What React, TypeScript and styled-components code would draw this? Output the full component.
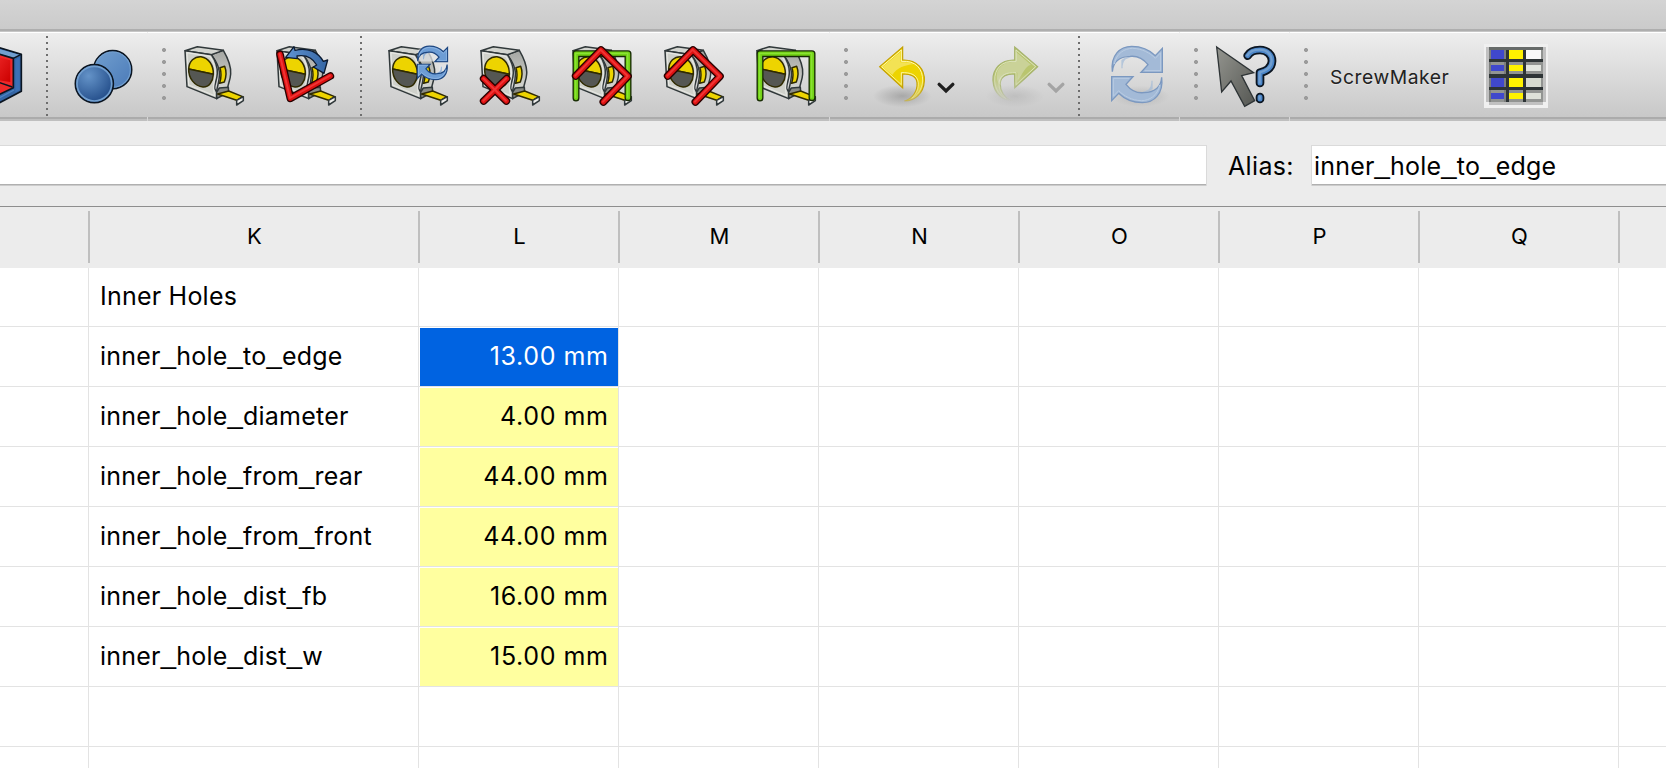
import React from "react";
import styled, { createGlobalStyle } from "styled-components";

const GlobalStyle = createGlobalStyle`
  * { box-sizing: border-box; }
  body { margin: 0; background: #fff; overflow: hidden; }
`;

const Window = styled.div`
  width: 1666px;
  height: 768px;
  overflow: hidden;
  display: flex;
  flex-direction: column;
  background: #ececec;
  color: #000;
  font-family: Inter, "Liberation Sans", sans-serif;
`;

const TitleStrip = styled.div`
  flex: none;
  height: 32px;
  background: linear-gradient(#d4d4d4, #cacaca);
  border-bottom: 1px solid #c6c6c6;
  box-shadow: inset 0 -2px 0 #aeaeae;
`;

const ToolbarRow = styled.div`
  flex: none;
  display: flex;
  gap: 1px;
  height: 89px;
  background: linear-gradient(#eeeeee, #c8c8c8 85px, #d6d6d6 85px);
`;

const ToolGroup = styled.div<{ $width?: number }>`
  flex: ${(p) => (p.$width ? `0 0 ${p.$width}px` : "1 1 0")};
  display: flex;
  align-items: flex-start;
  height: 89px;
  border-top: 1px solid #fff;
  border-bottom: 2px solid #bfbfbf;
  box-shadow: inset 0 -2px 0 #ababab;
  overflow: hidden;
`;

const Icon = styled.svg<{ $left?: number; $top?: number }>`
  flex: none;
  display: block;
  margin-left: ${(p) => p.$left ?? 0}px;
  margin-top: ${(p) => p.$top ?? 13}px;
  overflow: visible;
`;

const Paints = styled.svg`
  display: block;
  flex: none;
  width: 0;
  height: 0;
`;

const Separator = styled.div<{ $left: number }>`
  flex: none;
  width: 2px;
  height: 80px;
  margin: 3px 0 0 ${(p) => p.$left}px;
  background: repeating-linear-gradient(#6e6e6e 0 2px, transparent 2px 6px);
`;

const Handle = styled.div<{ $left: number }>`
  flex: none;
  width: 4px;
  height: 60px;
  margin: 11px 0 0 ${(p) => p.$left}px;
  background: radial-gradient(circle at 2px 6px, #9b9b9b 1.7px, transparent 2.3px) 0 0 / 4px 12px repeat-y;
`;

const ToolLabel = styled.span`
  flex: none;
  width: 154px;
  margin: 31px 0 0 22px;
  font-size: 19.3px;
  line-height: 26px;
  letter-spacing: 0.55px;
  color: #222;
  text-shadow: 0 1px 0 rgba(255, 255, 255, 0.4);
  white-space: nowrap;
`;

const FormulaBar = styled.div`
  flex: none;
  display: flex;
  align-items: flex-start;
  height: 85px;
  padding-top: 24px;
`;

const Field = styled.div<{ $width?: number }>`
  flex: ${(p) => (p.$width ? `0 0 ${p.$width}px` : "1 1 0")};
  height: 41px;
  padding-left: 2px;
  background: #fff;
  border: solid #dadada;
  border-width: ${(p) => (p.$width ? "1px 1px 0 0" : "1px 0 0 1px")};
  box-shadow: inset 0 -1px 0 #cccccc, inset 0 -2px 0 #b0b0b0;
  font-size: 25px;
  line-height: 40px;
  letter-spacing: 0.2px;
  white-space: nowrap;
`;

const FieldLabel = styled.span`
  flex: none;
  width: 104px;
  padding-left: 21px;
  font-size: 25px;
  line-height: 42px;
  letter-spacing: 0.35px;
  white-space: nowrap;
`;

const WideUnderscore = styled.span`
  font-family: "Liberation Sans", sans-serif;
  font-size: 27.5px;
  line-height: 0;
  vertical-align: 2px;
`;

const COLUMNS = "88px 330px repeat(6, 200px) 48px";

const HeaderRow = styled.div`
  flex: none;
  display: grid;
  grid-template-columns: ${COLUMNS};
  height: 62px;
  padding: 4px 0 5px;
  border-top: 1px solid #8e8e8e;
  background: #ececec;
`;

const HeaderCell = styled.div<{ $first?: boolean }>`
  border-left: ${(p) => (p.$first ? "0" : "2px solid #bfbfbf")};
  padding-left: 1px;
  font-size: 22px;
  line-height: 50px;
  text-align: center;
`;

const SheetRow = styled.div<{ $first?: boolean }>`
  flex: none;
  display: grid;
  grid-template-columns: ${COLUMNS};
  height: ${(p) => (p.$first ? 59 : 60)}px;
  background: #fff;
  line-height: ${(p) => (p.$first ? 55 : 57)}px;
`;

type Tone = "plain" | "value" | "selected";
const toneFill: Record<Tone, string> = { plain: "#fff", value: "#ffff9f", selected: "#0063e1" };

const Cell = styled.div<{ $edge?: boolean }>`
  display: flex;
  padding: 1px 0 0 1px;
  border-left: ${(p) => (p.$edge ? "0" : "1px solid #e3e3e3")};
  border-bottom: 1px solid #e3e3e3;
`;

const CellBody = styled.div<{ $tone: Tone; $right?: boolean }>`
  flex: 1;
  padding: 0 ${(p) => (p.$right ? 9.5 : 10)}px 0 10px;
  background: ${(p) => toneFill[p.$tone]};
  color: ${(p) => (p.$tone === "selected" ? "#fff" : "#000")};
  text-align: ${(p) => (p.$right ? "right" : "left")};
  font-size: 25px;
  letter-spacing: ${(p) => (p.$right ? "0.65px" : "0.22px")};
  word-spacing: ${(p) => (p.$right ? "-0.4px" : "0")};
  white-space: nowrap;
`;

const INK = "#30383a";

/** Measuring tape body shared by all the measurement tools. */
const TapeBody = () => (
  <g stroke={INK} strokeWidth="4.5" strokeLinejoin="round">
    <path d="M82 26 118 13C132 37 142 62 140 84 139 103 131 114 131 128L98 136C99 122 108 104 106 78 104 54 92 40 82 26Z" fill="url(#tapeSide)" />
    <path d="M3 14 40 2 118 13 82 26Z" fill="#d3d5d0" />
    <path d="M3 14 82 26C94 44 101 60 100 82 99 104 91 112 92 128L98 138V158L9 122Z" fill="#cfd1cb" />
    <path d="M9 20 78 31C90 50 95 64 94 84 92 104 84 120 92 149L14 117Z" fill="none" stroke="#e6e7e3" strokeWidth="3.5" />
    <path d="M14 69C15 46 31 31 51 32 74 36 89 57 88 85Z" fill="#edd400" stroke="#302b00" />
    <path d="M14 69 88 85C87 107 75 124 57 123 32 121 13 96 14 69Z" fill="#555753" stroke="#302b00" />
    <path d="M108 65 122 61C128 76 126 95 121 108L107 112C112 96 113 82 108 65Z" fill="#edd400" stroke="#302b00" />
    <path d="M98 138 106 126 133 124 134 138 98 158Z" fill="#888a85" />
    <path d="M101 144 134 135 176 152 158 163Z" fill="#edd400" stroke="#302b00" />
    <path d="M158 163 178 152V164L158 177Z" fill="#eeeeec" />
  </g>
);

type BarProps = { d: string; dark: string; mid: string; light: string; w: number };

const Bar = ({ d, dark, mid, light, w }: BarProps) => (
  <g fill="none" strokeLinecap="round" strokeLinejoin="round">
    <path d={d} stroke={dark} strokeWidth={w} />
    <path d={d} stroke={mid} strokeWidth={w - 8} />
    <path d={d} stroke={light} strokeWidth={w - 17} transform="translate(-1 -1)" />
  </g>
);

const red = { dark: "#280000", mid: "#dd1111", light: "#f03434", w: 23 };
const green = { dark: "#172a04", mid: "#73d216", light: "#8ae234", w: 21 };

const RedRoof = () => <Bar d="M11 90 87 12 168 91 94 168" {...red} />;
const GreenGate = () => <Bar d="M12 156V23H168V155" {...green} />;

const HALF_LOOP =
  "M4 77C-2 28 27 1 62 1 96 1 118 14 133 29L154 7V79H90L111 56C93 33 76 29 57 31 25 32 6 49 4 77Z";

const LoopArrows = ({ stroke, fill, shine, w }: { stroke: string; fill: string; shine: string; w: number }) => (
  <g strokeLinejoin="miter">
    <path d="M31 67V43C43 32 59 31 67 31L44 40Q34 50 35 67Z" fill={fill} opacity="0.7" />
    <path d="M125 104V128C113 139 97 140 89 140L112 131Q122 121 121 104Z" fill={fill} opacity="0.7" />
    {[undefined, "rotate(180 78 85.5)"].map((t) => (
      <g key={t ?? "top"} transform={t}>
        <path d={HALF_LOOP} fill={fill} stroke={stroke} strokeWidth={w} />
        <path d="M10 54C16 22 41 7 65 7 94 8 117 21 133 37L149 20V74H101" fill="none" stroke={shine} strokeWidth="3" />
      </g>
    ))}
  </g>
);

const CurvedArrow = ({ id }: { id: string }) => (
  <>
    <path
      d="M2 62 71 3V42C114 40 138 70 136 105 134 145 104 166 76 165 101 157 116 135 114 110 112 91 94 84 71 84V126Z"
      fill={`url(#${id}Fill)`}
      stroke={`url(#${id}Edge)`}
      strokeWidth="3.5"
    />
    <path
      d="M8 62 67 12V46C110 43 132 68 131 105 129 132 113 151 98 157 113 144 119 126 118 110 115 86 95 79 67 80V116Z"
      fill="none"
      stroke={`url(#${id}Shine)`}
      strokeWidth="3"
    />
  </>
);

const Fade = ({ id, color, from, end }: { id: string; color: string; from: number; end: number }) => (
  <linearGradient id={id} x1="0" x2="0" y1="0" y2="1">
    <stop offset={from} stopColor={color} />
    <stop offset="1" stopColor={color} stopOpacity={end} />
  </linearGradient>
);

const SharedPaints = () => (
  <Paints aria-hidden="true">
    <defs>
      <linearGradient id="tapeSide" x1="0" x2="0" y1="0" y2="1">
        <stop offset="0" stopColor="#a4a6a2" /><stop offset="1" stopColor="#d8d9d5" />
      </linearGradient>
      <Fade id="undoFill" color="#edd400" from={0.6} end={0.35} />
      <Fade id="undoEdge" color="#c4a000" from={0.75} end={0.35} />
      <Fade id="undoShine" color="#fff8b8" from={0.4} end={0.3} />
      <Fade id="redoFill" color="#b9c56f" from={0.5} end={0} />
      <Fade id="redoEdge" color="#a6b36e" from={0.6} end={0} />
      <Fade id="redoShine" color="#dde4bf" from={0.4} end={0.2} />
      <radialGradient id="softShade">
        <stop offset="0" stopColor="#000" stopOpacity=".2" /><stop offset="1" stopColor="#000" stopOpacity="0" />
      </radialGradient>
      <linearGradient id="ballBack" x1="0" x2="1" y1="0" y2="1">
        <stop offset="0" stopColor="#729fcf" /><stop offset="1" stopColor="#4a7ab8" />
      </linearGradient>
      <radialGradient id="ballFront" cx=".35" cy=".3" r=".75">
        <stop offset="0" stopColor="#6493c8" /><stop offset="1" stopColor="#204a87" />
      </radialGradient>
      <linearGradient id="cubeRed" x1="0" x2="1" y1="0" y2="1">
        <stop offset="0" stopColor="#ef2929" /><stop offset="1" stopColor="#cc0000" />
      </linearGradient>
      <linearGradient id="pointer" x1="0" x2="1" y1="0" y2="1">
        <stop offset="0" stopColor="#94958f" /><stop offset="1" stopColor="#555753" />
      </linearGradient>
      <linearGradient id="swing" x1="0" x2="1">
        <stop offset="0" stopColor="#5f93d0" /><stop offset="1" stopColor="#3465a4" />
      </linearGradient>
    </defs>
  </Paints>
);

const Tape = ({ left, children }: { left: number; children?: React.ReactNode }) => (
  <Icon $left={left} width="60" height="60" viewBox="0 0 180 180">
    <TapeBody />
    {children}
  </Icon>
);

const CubeIcon = () => (
  <Icon $top={13} width="22" height="60" viewBox="0 0 66 180" strokeLinejoin="round">
    <path d="M-20 0 64 25V136L-20 180Z" fill="#3465a4" stroke="#0b1521" strokeWidth="5" />
    <path d="M-20 4 60 27 41 36-20 18Z" fill="#729fcf" />
    <path d="M46 41 59 34V132L46 139Z" fill="#3b71b5" />
    <path d="M-20 19 40 37V125L-20 154Z" fill="#ef2929" stroke="#0b1521" strokeWidth="5" />
    <path d="M-20 29 31 43V108L-20 101Z" fill="url(#cubeRed)" />
    <path d="M-20 103 37 123M40 37 62 26" fill="none" stroke="#0b1521" strokeWidth="4.5" />
    <path d="M-20 165 42 132" stroke="#4b84c4" strokeWidth="4" />
  </Icon>
);

const UnionIcon = () => (
  <Icon $left={26} width="60" height="60" viewBox="0 0 180 180">
    <circle cx="116" cy="71" r="57" fill="url(#ballBack)" stroke="#0b1521" strokeWidth="5" />
    <circle cx="116" cy="71" r="53" fill="none" stroke="#729fcf" strokeWidth="3.5" />
    <circle cx="61" cy="113" r="57" fill="url(#ballFront)" stroke="#0b1521" strokeWidth="5" />
    <circle cx="61" cy="113" r="52" fill="none" stroke="#729fcf" strokeWidth="5" />
  </Icon>
);

const Chevron = ({ left, color }: { left: number; color: string }) => (
  <Icon $left={left} $top={49} width="18" height="12" viewBox="0 0 18 12">
    <path d="M2.2 2.4 9 9 15.8 2.4" fill="none" stroke={color} strokeWidth="3.4" strokeLinecap="round" strokeLinejoin="miter" />
  </Icon>
);

const SheetIcon = () => {
  const rows = [
    { y: 18, h: 27, pale: "#f8f8f8" },
    { y: 63, h: 18, pale: "#e3e6e0" },
    { y: 102, h: 27, pale: "#d6dad0" },
    { y: 147, h: 18, pale: "#dde0d8" },
  ];
  return (
    <Icon $top={11} width="64" height="64" viewBox="0 0 192 192" shapeRendering="crispEdges">
      <path d="M0 0H192V192H0Z" fill="#f0f0f0" />
      <path d="M6 9H186V174H177V183H15V174H6Z" fill="#c1c1c1" />
      <path d="M15 9H177V174H15Z" fill="#929492" />
      <path d="M15 9H177V18H15Z" fill="#666a69" />
      <path d="M15 18H21V174H15ZM60 18H66V174H60Z" fill="#7c7e7d" />
      {rows.map((r) => (
        <g key={r.y}>
          <rect x="21" y={r.y} width="39" height={r.h} fill="#4048cc" />
          <rect x="75" y={r.y} width="42" height={r.h} fill="#fff200" />
          <rect x="126" y={r.y} width="45" height={r.h} fill={r.pale} />
        </g>
      ))}
      <path d="M66 18H75V174H66ZM117 18H126V174H117ZM15 45H177V54H15ZM15 90H177V102H15ZM15 129H177V138H15Z" fill="#2e3436" />
    </Icon>
  );
};

const HEADERS = ["", "K", "L", "M", "N", "O", "P", "Q", ""];
const ROWS: Array<[string, string]> = [
  ["Inner Holes", ""],
  ["inner_hole_to_edge", "13.00 mm"],
  ["inner_hole_diameter", "4.00 mm"],
  ["inner_hole_from_rear", "44.00 mm"],
  ["inner_hole_from_front", "44.00 mm"],
  ["inner_hole_dist_fb", "16.00 mm"],
  ["inner_hole_dist_w", "15.00 mm"],
  ["", ""],
  ["", ""],
];
const SELECTED_ROW = 1;

/** Identifier text with full-width underscores between its words. */
const Identifier = ({ text }: { text: string }) => (
  <>
    {text.split("_").map((word, i) => (
      <React.Fragment key={i}>
        {i > 0 && <WideUnderscore>_</WideUnderscore>}
        {word}
      </React.Fragment>
    ))}
  </>
);

const QUESTION = "M95 29C103 15 117 12 132 12 154 12 169 27 168 46 167 69 149 76 132 80V111M132 153V159";

const Toolbar = () => (
  <ToolbarRow>
    <ToolGroup $width={147}>
      <CubeIcon />
      <Separator $left={24} />
      <UnionIcon />
    </ToolGroup>
    <ToolGroup $width={681}>
      <Handle $left={14} />
      <Tape left={18} />
      <Tape left={32}>
        <path
          d="M29 34 54 2 57 13C96 3 126 19 142 46L155 42 144 82 112 63 122 57C110 36 88 26 63 30L64 38Z"
          fill="url(#swing)"
          stroke="#0b1a30"
          strokeWidth="4"
          strokeLinejoin="round"
        />
        <Bar d="M12 25 43 157 163 90" {...red} />
      </Tape>
      <Separator $left={24} />
      <Tape left={26}>
        <g transform="translate(87 0) scale(.595)">
          <path d="M5 20Q60-10 151 20V78H5ZM110 97H150V135H110Z" fill="#e1e4e7" opacity=".75" />
          <LoopArrows stroke="#1d4680" fill="#6d9dd5" shine="#9fc3eb" w={6} />
        </g>
      </Tape>
      <Tape left={32}>
        <Bar d="M11 98 79 165M80 98 11 165" {...red} />
      </Tape>
      <Tape left={32}><GreenGate /><RedRoof /></Tape>
      <Tape left={32}><RedRoof /></Tape>
      <Tape left={32}><GreenGate /></Tape>
    </ToolGroup>
    <ToolGroup $width={349}>
      <Handle $left={14} />
      <Icon $left={31} width="48" height="60" viewBox="0 0 144 180">
        <ellipse cx="70" cy="150" rx="88" ry="34" fill="url(#softShade)" />
        <CurvedArrow id="undo" />
        <path d="M11 62 64 18V49C82 49 93 50 102 55 80 57 53 65 40 87Z" fill="#fff" opacity=".33" />
      </Icon>
      <Chevron left={10} color="#1f1f1f" />
      <Icon $left={36} width="48" height="60" viewBox="0 0 144 180">
        <ellipse cx="72" cy="150" rx="88" ry="34" fill="url(#softShade)" opacity=".45" />
        <g transform="translate(142 0) scale(-1 1)">
          <CurvedArrow id="redo" />
        </g>
        <path d="M75 18 120 56C101 61 97 82 79 105V80C50 75 28 88 28 118 14 102 12 78 30 61 45 47 60 48 75 47Z" fill="#e4e7d8" opacity=".4" />
      </Icon>
      <Chevron left={8} color="#a4a4a4" />
      <Separator $left={13} />
      <Icon $left={31} width="52" height="60" viewBox="0 0 156 180">
        <ellipse cx="88" cy="151" rx="88" ry="32" fill="url(#softShade)" opacity=".6" />
        <LoopArrows stroke="#7b98c0" fill="#a3bad7" shine="#b9cce3" w={4} />
      </Icon>
    </ToolGroup>
    <ToolGroup $width={109}>
      <Handle $left={14} />
      <Icon $left={18} width="60" height="62" viewBox="0 0 180 186">
        <path d="M2 3 113 80 77 89 116 164 86 181 45 105 17 138Z" fill="url(#pointer)" stroke="#2e3436" strokeWidth="4" />
        <g fill="none" strokeLinecap="round" strokeLinejoin="round">
          <path d={QUESTION} stroke="#0b1521" strokeWidth="26" />
          <path d={QUESTION} stroke="#4b86c9" strokeWidth="15" />
          <path d={QUESTION} stroke="#729fcf" strokeWidth="7" transform="translate(-1 -1)" />
        </g>
      </Icon>
    </ToolGroup>
    <ToolGroup>
      <Handle $left={14} />
      <ToolLabel>ScrewMaker</ToolLabel>
      <SheetIcon />
    </ToolGroup>
  </ToolbarRow>
);

export default function App() {
  return (
    <Window>
      <GlobalStyle />
      <SharedPaints />
      <TitleStrip />
      <Toolbar />
      <FormulaBar>
        <Field $width={1207} />
        <FieldLabel>Alias:</FieldLabel>
        <Field><Identifier text={ROWS[SELECTED_ROW][0]} /></Field>
      </FormulaBar>
      <HeaderRow>
        {HEADERS.map((h, i) => (
          <HeaderCell key={i} $first={i === 0}>{h}</HeaderCell>
        ))}
      </HeaderRow>
      {ROWS.map(([name, value], r) => (
        <SheetRow key={r} $first={r === 0}>
          {HEADERS.map((_, c) => {
            const tone: Tone = c === 2 && value ? (r === SELECTED_ROW ? "selected" : "value") : "plain";
            return (
              <Cell key={c} $edge={c === 0}>
                <CellBody $tone={tone} $right={c === 2}>
                  {c === 1 ? <Identifier text={name} /> : c === 2 ? value : ""}
                </CellBody>
              </Cell>
            );
          })}
        </SheetRow>
      ))}
    </Window>
  );
}
